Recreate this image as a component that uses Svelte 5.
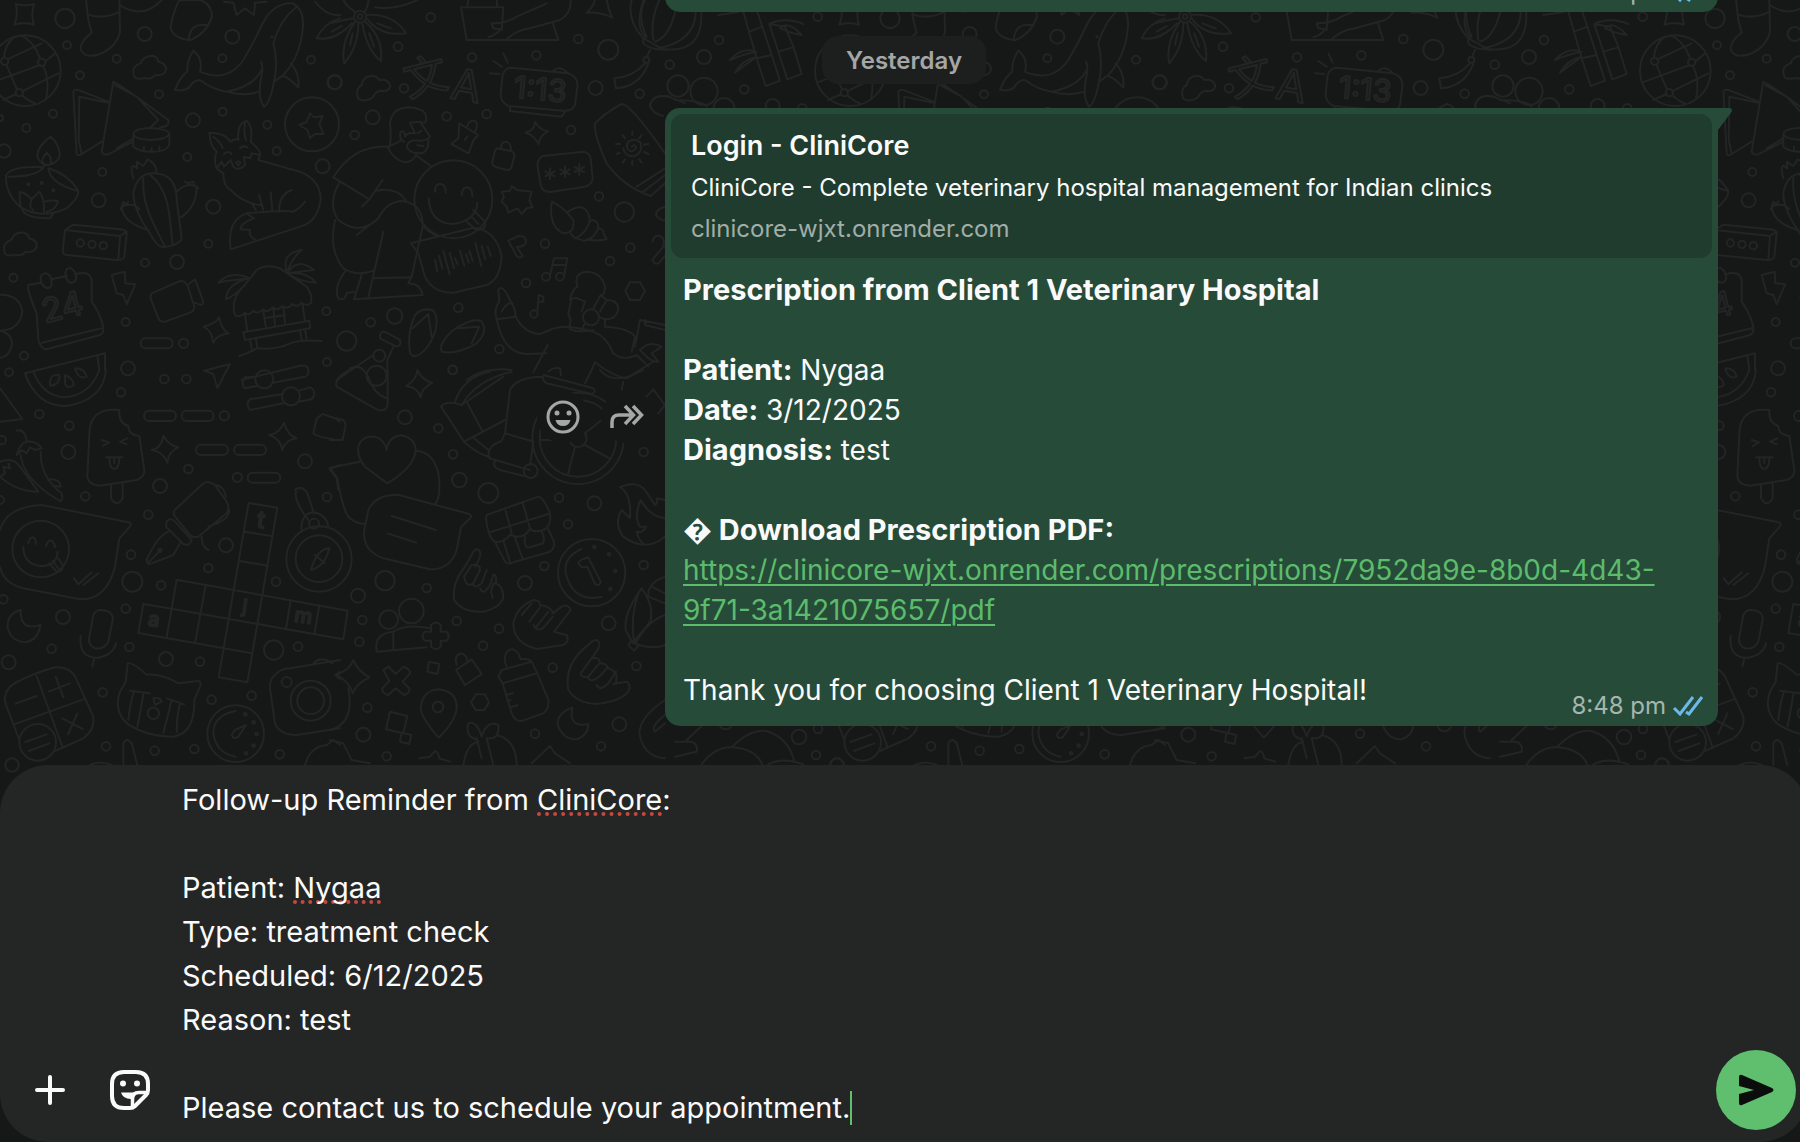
<script lang="ts">
  type Patch = {
    x: number
    y: number
    dots: number[][]
    pills?: number[][]
    glyphs?: { t: string; x: number; y: number; size: number; turn: number }[]
    lines: string[]
  }

  const TILE = 825
  const tiles = [0, 1, 2, 3]

  // Doodle wallpaper, drawn at 3x and scaled down per patch
  const patches: Patch[] = [
    {
      x: 0, y: 0,
      dots: [
        [195,55,29],[434,102,21],[697,110,21],[201,136,12],[350,176,12],[240,226,12],[477,283,12],[667,175,12],
        [933,179,12],[1003,247,21],[159,341,12],[79,384,12],[0,354,9],[579,361,21],[668,335,12],[802,374,12],
        [12,453,20],[830,453,12],[562,471,12],[968,499,21],[307,516,12],[296,601,21],[640,620,21],[625,731,12],
        [435,788,12],[531,786,21],[40,833,12],[377,966,12],[551,1030,14],[979,934,12],[72,1067,12],[384,1105,21],
        [27,1117,12],[981,1086,12],[936,373,81],[76,212,106],[14,184,11],[125,187,11],[58,278,11],[85,553,3],
        [125,549,3],[160,571,3],[241,729,11],[276,733,11],[310,737,11],[816,110,2],
      ],
      pills: [[422,1015,96,30]],
      glyphs: [{ t: '24', x: 195, y: 955, size: 100, turn: -14 }],
      lines: [
        'M47 12Q76 20 102 12Q92 42 102 74Q72 66 43 74Q56 42 47 12',
        'M12 170Q16 130 45 110M60 106Q100 120 120 175M22 178L125 130M-25 248L120 195M10 300Q30 290 50 282M66 274L175 220M20 196L50 266M130 200Q150 240 138 298M68 287Q90 305 105 310M138 182L166 160',
        'M258 0L265 60L275 98Q240 125 242 148Q255 178 300 162Q350 140 360 95L358 0M262 43Q310 60 360 35M358 15Q430 60 485 0',
        'M535 5Q515 50 512 85Q520 115 570 121Q620 100 636 50Q635 10 600 0H550Q538 0 535 5M566 120Q570 65 626 76',
        'M672 5L700 8L710 45L735 25L762 45L765 8L800 5',
        'M404 232Q390 200 422 190Q430 165 460 168Q475 172 475 185Q500 190 498 210Q490 230 465 225Q455 240 435 234Q415 240 404 232Z',
        'M600 215Q680 250 730 180Q760 130 785 75Q820 5 880 10Q915 30 908 90Q900 170 850 225L822 245Q835 190 820 130Q840 60 888 22M822 245Q810 310 792 320Q770 290 785 225Q790 200 783 185M785 210Q760 260 680 275Q640 270 600 240Q580 240 568 262Q550 275 525 270Q540 230 562 215Q560 180 580 152Q610 175 600 215M680 275Q730 290 778 275M872 190Q900 220 895 263Q870 235 850 228',
        'M945 5Q980 50 1020 45M950 115Q970 70 1020 55M950 115Q990 120 1020 100',
        'M220 275Q225 265 240 272L325 305M220 275L230 462Q235 470 245 462L305 425M238 290L325 308M238 290L236 420L245 462M340 245L305 455Q310 470 330 460L400 425M340 245Q350 245 505 360Q510 380 480 382M345 255L410 290L475 360L450 383M400 415L350 445',
        'M400 402Q402 385 455 384Q508 388 508 402Q500 418 455 420Q405 418 400 402V440Q420 456 455 455Q500 456 508 435V402M432 440V450M455 445V455M478 440V450',
        'M930 340L942 352L968 348L958 372L970 402L945 402L930 414L922 390L898 375L920 366Z',
        'M152 410Q110 440 112 470Q125 500 150 494Q185 480 178 455Q175 430 152 410ZM140 458Q122 475 130 492M140 458Q160 475 150 492M18 525Q40 495 130 502Q110 530 25 530M18 525Q15 580 60 620Q120 660 200 625Q240 590 234 570Q200 520 145 505Q150 550 234 573M130 502L137 492M60 575Q55 610 70 635Q85 655 150 655L160 640M60 575Q80 580 95 598L118 575Q135 600 132 635M95 598Q85 625 100 630M135 605Q150 598 175 604Q165 630 140 635',
        'M400 535Q390 500 400 497L412 505L410 485L430 498L443 478Q470 490 470 520M490 742Q470 740 450 700Q400 630 400 580Q410 520 460 520Q530 520 530 600L545 715Q540 735 490 742ZM430 535Q425 600 460 670Q480 710 495 740M450 525Q500 560 510 660L518 735M445 690Q370 670 365 620Q400 605 418 628M362 628L370 605L378 615L385 605M530 575Q560 545 590 560Q590 620 543 652M555 545L565 550L580 545L582 555L595 565',
        'M628 398Q630 440 650 455Q640 480 650 505L670 520Q670 560 692 570Q730 610 780 615M628 398Q680 400 690 425Q720 410 715 420Q710 370 740 362Q760 380 752 425Q785 455 780 465L775 480L900 515Q960 540 962 595Q955 665 900 680L692 748Q680 660 740 640Q850 630 880 635Q900 625 915 605M740 640L762 655Q720 670 722 688L750 690Q745 710 765 718M640 410Q665 430 668 445M735 370Q730 400 738 420M672 462Q685 450 695 462M720 445Q730 435 742 442M650 505L665 485L672 500L692 480L700 500Q715 515 735 495L732 470L750 475L755 460L780 465M708 488Q715 480 722 488L715 496ZM777 585L790 630M812 577L817 632M838 635Q835 585 875 570M758 615L768 630',
        'M195 690L188 755Q190 765 200 765L350 780Q370 780 373 770L380 700Q380 690 360 688L220 674ZM195 690L360 708L355 778M360 708L380 695',
        'M16 762Q2 730 34 720Q42 695 72 698Q87 702 87 715Q112 720 110 740Q102 760 77 755Q67 770 47 764Q27 770 16 762Z',
        'M85 855Q80 870 110 940L115 1020Q125 1050 140 1048L300 1005Q312 1000 310 980Q300 940 275 905V840Q270 815 240 820L225 823M200 828L155 838M122 848L85 855M125 1028L305 985M122 840Q120 820 138 820Q155 825 155 850Q155 865 140 864Q125 858 122 840M196 820Q198 803 212 804Q230 815 228 838Q222 850 210 848Q197 840 196 820',
        'M335 825L374 815L376 850L406 853L380 912L370 885L350 880Z',
        'M455 880L540 843Q560 840 567 870L583 920Q583 932 570 938L495 965Q480 967 475 955L452 895Q450 885 455 880ZM567 852L585 838L610 905Q610 915 600 914L583 908',
        'M610 980Q650 970 657 952Q665 990 686 1000Q650 1005 640 1028Q635 990 610 980Z',
        'M705 945Q690 900 730 860L770 810Q800 790 840 805L920 860Q940 890 932 910Q920 920 905 908Q890 925 878 912Q860 930 848 918Q830 935 820 922Q800 940 790 928Q770 945 760 932Q745 950 735 938Q715 955 705 945M735 945L742 995M908 915L915 965M730 997L928 962L930 985L735 1020ZM750 1020L755 1045M768 1018L772 1042M900 992L905 1018M915 990L920 1015M790 930L798 985M850 920L855 970M820 925L825 975M793 955L855 945M718 1068Q745 1060 770 1045Q830 1050 870 1030Q900 1018 965 1023M655 848Q690 810 750 835Q690 840 655 848ZM750 835Q680 850 678 898Q700 890 735 855M862 820Q840 760 905 750Q870 780 862 820ZM862 820Q890 770 942 810ZM862 820Q920 815 948 848Q900 845 870 825',
        'M0 884Q60 884 67 935Q60 990 0 992Q35 1000 36 1030Q30 1070 0 1073',
        'M75 1120L315 1060V1110M292 1068L298 1110M612 1112L690 1092L652 1165L640 1122ZM725 1140L900 1097Q928 1095 925 1112',
      ],
    },
    {
      x: 330, y: 0,
      dots: [
        [302,52,13],[204,140,13],[426,172,13],[619,166,13],[745,117,13],[835,149,30],[15,247,21],[222,265,13],
        [128,352,21],[350,349,13],[470,342,13],[74,405,13],[723,390,13],[797,264,21],[929,281,13],[807,589,13],
        [883,636,29],[901,743,13],[645,731,13],[840,783,13],[588,849,13],[385,923,13],[194,948,23],[122,967,13],
        [50,1023,29],[508,1047,13],[368,1109,13],[148,1067,18],[90,50,18],[90,50,7],[370,598,117],[783,952,24],
        [949,180,9],[648,830,12],[690,830,12],[612,942,11],[140,1127,30],
      ],
      glyphs: [
        { t: '1:13', x: 628, y: 300, size: 92, turn: 5 },
        { t: '文', x: 298, y: 275, size: 130, turn: -14 },
        { t: 'A', x: 402, y: 302, size: 130, turn: 10 },
      ],
      lines: [
        'M75 65Q30 130 43 190Q85 140 85 70M97 70Q110 150 153 183Q160 110 105 65M110 55Q150 110 228 100Q190 40 110 45M75 35Q50 20 40 0M105 35Q115 15 115 0M72 55Q40 60 0 70M65 70Q40 100 0 112M135 22Q200 30 262 0M68 100L60 135M118 100L132 140M142 70L182 85M35 78L5 95',
        'M393 22H520L515 90M393 22L410 120H685L668 68M415 0L412 20M500 0L502 20M485 70Q530 70 560 50L650 10M485 70L490 85L510 88Q500 105 475 112M530 118Q560 90 600 85L690 60Q725 40 722 0',
        'M770 38Q790 20 795 0M830 0Q835 30 847 53Q810 35 770 38',
        'M905 0Q890 60 940 115M945 0Q920 50 950 110Q930 120 945 135Q970 150 1000 148M988 0Q960 60 970 120M960 150L950 172M945 190Q910 230 853 235L858 265Q930 260 955 190',
        'M84 295Q75 265 95 255Q100 225 130 228Q145 232 148 240Q175 235 181 258Q175 278 152 272Q135 275 130 290Q105 310 84 295Z',
        'M545 203L715 220Q745 230 742 260L735 315Q725 335 700 332L535 318Q510 305 512 280L518 225Q525 203 545 203ZM540 320V333L695 350L705 335M670 212Q690 195 712 218M490 183L515 200M520 160L533 188M480 220L508 222',
        'M178 440Q185 420 180 370Q185 325 235 322Q285 325 288 350Q292 375 270 365L240 368L255 400Q230 395 225 410Q225 390 212 395Q205 415 222 425M270 365L300 410Q295 420 275 422Q235 415 230 440Q240 465 280 458Q298 445 295 420M172 440Q190 480 225 487Q250 485 258 465M262 436L280 438M175 440Q210 425 215 420M262 400L275 392',
        'M300 497L258 465M172 440Q70 435 10 532L118 598L158 540M118 598L95 620M140 572Q200 560 228 602M30 545Q-10 610 25 660Q90 710 145 655Q170 605 215 603Q280 610 278 680L245 830L235 850Q270 850 278 885L72 898L95 825M145 655L80 705M160 695L115 892M132 835L242 832M15 660Q-5 750 40 805Q80 830 132 812M45 815Q10 860 25 895Q45 905 50 880L72 875M280 680Q300 700 322 708',
        'M315 575Q315 550 332 552Q348 555 347 578M395 585Q398 560 412 562Q427 565 427 588M296 595Q300 670 370 672Q440 660 442 608M430 630L465 665Q470 690 440 690L410 665M425 650L445 672',
        'M388 370L445 405L430 420L416 460L364 432L385 415ZM412 378Q420 355 438 365Q445 375 435 395M405 420L412 410',
        'M243 730L430 683Q500 690 515 770Q510 840 470 855L370 878Q310 880 285 830L265 760ZM315 780L322 815M327 768L337 805M340 753L359 823M359 760L372 805M375 775L383 793M390 752L403 798M408 762L416 788M418 752L428 783M436 728L454 798M455 738L466 778M473 740L482 768',
        'M500 445L540 452Q555 458 553 468L545 500Q540 512 530 510L495 500Q485 495 487 485L495 452ZM513 445Q513 425 528 425Q545 430 542 452',
        'M587 398Q615 390 615 365Q630 390 654 394Q630 405 626 432Q612 405 587 398Z',
        'M545 558L560 570L580 572L605 575L598 600L608 622L590 625L575 642L562 625L535 638L530 620L515 605L522 590L515 575L540 572Z',
        'M640 468L760 455Q780 458 782 475L788 535Q785 555 765 560L660 576Q635 575 632 555L622 495Q625 472 640 468ZM660 505V538M646 514L674 529M674 514L646 529M705 499V532M691 508L719 523M719 508L691 523M748 492V525M734 501L762 516M762 501L734 516',
        'M795 370Q830 335 875 312Q900 310 1005 460M795 370Q790 400 830 490Q880 560 962 588L1010 545M920 560L1005 505M940 575L1005 525M907 395V405M878 405L885 415M858 432H870M860 462L870 458M878 488L885 478M907 495V483M935 488L928 478M955 462L942 456M955 432L942 434M935 405L928 415M905 440Q915 430 918 443Q912 458 898 452Q885 440 895 425Q915 412 932 428Q940 455 915 468Q885 472 880 445',
        'M1020 290Q970 280 960 315Q965 340 1000 348M1020 620Q980 620 978 645Q990 665 1020 662',
        'M665 605Q655 680 700 700Q735 700 730 660Q700 620 665 605M715 635Q770 600 780 660Q770 700 735 715L722 700M778 662Q805 655 805 685Q790 720 760 722L740 715M805 685Q825 690 820 700L830 718Q800 725 770 718',
        'M535 722L565 708Q590 705 588 728Q580 742 560 740L578 768Q570 778 560 768Z',
        'M660 825L672 775H712L702 830M670 795H708M622 940L626 885L640 890V905H624',
        'M968 725Q970 705 990 708Q1005 715 1000 735L1012 750M1000 740L968 778Q970 795 985 790L1012 760',
        'M720 900Q725 870 742 860Q730 815 775 815Q815 820 825 860Q825 880 815 888M742 895Q720 890 722 910L715 940L722 960L718 985Q740 1000 790 990M742 895L765 905L755 935M790 925L812 885L830 900L810 935M830 900Q865 900 865 930Q855 960 825 958L805 950M825 958V980M765 970L750 995',
        'M900 847H930L945 873L930 900H900L886 873Z',
        'M505 870Q515 855 530 880L545 910Q560 935 555 950L500 958Q490 930 508 905ZM515 935Q530 905 548 910M500 958Q520 1060 590 1062L650 1060M555 945Q580 1000 630 1002L660 990Q700 970 790 995Q830 1010 850 1060Q880 1085 920 1065L955 1100M825 980Q900 985 915 1010L905 1055M653 1035L610 1117M770 1140L795 1087Q850 1130 890 1135L970 1085M930 960L915 1040M930 960L1005 975M945 960V975L1005 990M930 1050Q960 1020 995 1040L965 1060L985 1085Q965 1090 930 1050',
        'M240 1060Q230 1000 255 945Q280 920 310 932Q330 960 310 1010Q280 1070 250 1068ZM248 985L295 942L305 1010M335 1055Q325 1030 370 990Q430 950 455 965Q475 995 440 1030Q380 1065 335 1055ZM385 985L448 980L425 1030',
        'M20 1140L130 1065M150 1005Q155 990 170 998L210 1020Q215 1035 200 1040L150 1015ZM190 1040L172 1080V1140M60 1105Q90 1090 108 1120M410 1140Q460 1100 545 1110M655 1115Q670 1100 690 1105L693 1125',
      ],
    },
    {
      x: 0, y: 370,
      dots: [
        [363,67,13],[118,132,13],[208,167,13],[205,246,21],[5,210,13],[493,27,13],[559,27,13],[673,137,14],
        [793,28,27],[873,79,27],[565,297,13],[712,322,14],[480,348,21],[915,274,21],[981,381,13],[256,379,13],
        [445,434,13],[0,390,12],[122,537,85],[678,526,21],[393,554,13],[625,594,13],[828,635,13],[397,635,30],
        [483,646,13],[10,688,13],[377,716,13],[189,741,21],[155,836,13],[388,831,13],[26,877,21],[498,867,21],
        [600,875,13],[821,840,29],[894,830,13],[860,936,15],[308,967,13],[635,989,13],[755,977,13],[932,992,60],
        [932,992,40],[707,1091,85],[736,1033,4],[761,1057,4],[770,1092,4],[761,1127,4],[738,1150,4],[113,1117,55],
        [318,1129,13],[464,1142,13],[583,1137,13],[839,1153,13],[36,1185,20],[957,567,98],[957,566,70],[942,461,15],
        [480,541,5],[460,1030,17],
      ],
      pills: [[432,122,96,31],[545,122,96,31],[588,224,96,31],[702,224,96,31],[743,308,98,30]],
      glyphs: [
        { t: 't', x: 780, y: 473, size: 70, turn: 8 },
        { t: 'a', x: 459, y: 768, size: 60, turn: 8 },
        { t: 'j', x: 732, y: 728, size: 55, turn: 8 },
        { t: 'm', x: 907, y: 758, size: 60, turn: 8 },
      ],
      lines: [
        'M75 10Q110 110 200 108Q310 90 318 0M100 5Q130 80 195 82Q270 75 298 0M150 40Q150 10 178 15Q180 45 150 47ZM195 15Q220 25 222 45Q200 60 195 40ZM225 -5Q255 -5 260 20Q235 30 225 -5Z',
        'M0 55L67 147L0 155M765 20L735 22Q720 38 735 55L770 48M818 38L915 20Q928 15 925 0M848 72L750 88Q735 100 750 120L850 100M898 62L930 52Q945 58 942 75Q940 88 925 90L895 95',
        'M940 190L950 145L968 132L1005 145L1020 155M940 190Q950 200 1000 208',
        'M50 182Q75 175 80 215Q60 220 50 255L65 240L80 250L90 232L105 240L125 235Q110 212 80 215M62 255Q70 330 180 393Q190 390 185 370Q120 320 122 245M0 275Q40 260 60 290L115 365Q50 365 0 320L15 310L10 290L30 295L25 280M145 328Q180 325 182 350L165 348',
        'M358 120Q270 110 268 190L262 320Q265 345 300 347L410 330Q435 320 433 300L418 198Q385 195 385 168Q355 160 358 120ZM333 345V385Q350 415 368 385V340M305 210L327 217L308 228M382 205L360 215L380 223M318 262H368M328 264Q328 295 343 297Q358 295 358 264M343 265V280',
        'M455 240Q485 235 490 197Q505 225 535 232Q505 245 502 278Q490 245 455 240ZM808 195Q840 190 852 158Q862 195 890 205Q855 210 847 240Q840 205 808 195Z',
        'M610 340Q625 330 645 345L680 395Q690 410 680 430L595 500Q580 505 570 495L525 440Q515 425 530 415ZM500 455Q510 440 525 455L575 510Q570 530 550 522L498 470ZM505 485Q470 500 440 570Q440 585 455 580L520 555L540 520M445 578L480 542M645 345Q670 345 678 380M688 420Q690 450 625 470M605 500Q605 530 625 540',
        'M125 405L385 457Q400 460 385 475L358 505L345 590Q320 690 240 688L70 655Q10 640 0 590M0 480Q20 410 125 405M85 520Q90 500 100 502Q110 510 107 522M138 528Q145 508 155 512Q165 520 165 532M70 530Q70 580 120 588Q170 590 173 545M148 580L170 605Q190 605 188 585L175 565M158 572L175 595M222 625L235 643L275 607M250 645L295 610',
        'M62 720Q20 730 23 775Q35 815 75 817Q115 810 121 765Q60 785 62 720Z',
        'M300 720Q340 720 338 750L325 815Q310 840 285 835Q262 825 268 800L280 735Q288 720 300 720ZM242 798Q235 865 295 863Q340 855 348 820M283 865L277 890',
        'M746 399L832 413L742 937L656 922ZM733 485L818 499M718 573L804 587M1043 722L530 629L500 803M515 716L1030 808M617 646L585 820M515 716L430 702L415 789L756 850M872 690L858 777M958 706L943 793M1043 722L1030 808',
        'M885 360Q900 345 920 365L942 430M888 365Q880 390 925 450M905 485Q900 430 942 427Q980 435 985 470M985 535Q950 540 933 600Q975 590 988 535ZM945 555L975 580M1020 285L988 297L1010 325L1015 360',
        'M30 950Q70 920 165 892Q215 890 230 930L280 1040Q285 1080 250 1105L165 1143M30 950Q5 980 20 1010L58 1110M110 918L187 1130M42 1063L257 986M47 1001L110 978M147 964L210 940M167 920L190 982M187 1045L248 1077M232 1030L204 1093M76 1116L140 1093M86 1143L148 1120',
        'M383 880Q395 875 440 914Q490 912 535 940L595 933Q605 935 600 950L583 990Q585 1090 520 1100Q440 1100 380 1060Q340 1020 360 965L377 935ZM390 962L450 970M500 985L552 1003M402 965Q390 1000 385 1050M430 970Q425 1010 412 1070M515 990Q505 1030 490 1090M540 1000Q530 1040 530 1085M460 985Q480 980 485 995L465 1005Z',
        'M707 1023Q640 1035 640 1091Q650 1150 707 1160M738 1065L715 1100Q700 1110 695 1095L705 1080Z',
        'M820 920Q840 895 870 895L1020 870M820 920Q805 935 812 970L825 1060Q840 1095 890 1095L1020 1075M938 883Q960 855 998 880M1020 905L1005 915L1020 928',
        'M370 1185V1120Q380 1100 395 1120L412 1185M915 1185Q930 1130 980 1125L1000 1110L1020 1125M270 1185Q300 1170 335 1185',
      ],
    },
    {
      x: 330, y: 370,
      dots: [
        [225,142,21],[325,175,13],[369,253,13],[368,0,13],[388,330,22],[475,369,30],[687,383,13],[793,400,21],
        [714,463,13],[941,246,13],[643,588,13],[585,639,21],[785,608,101],[793,531,4],[837,553,4],[856,603,4],
        [841,657,4],[941,585,13],[836,760,21],[919,888,13],[668,893,13],[165,632,29],[84,677,21],[290,654,13],
        [97,750,13],[88,815,13],[380,753,13],[507,776,13],[459,827,13],[176,749,28],[244,723,37],[324,1011,16],
        [112,1013,13],[100,1094,21],[170,1159,13],[615,1091,13],[868,1063,21],[813,1129,13],[744,205,137],
        [744,205,115],[744,205,26],[602,303,21],
      ],
      lines: [
        'M20 50Q10 25 60 0M20 50L140 118Q175 130 173 95V0M115 20Q130 70 170 85',
        'M228 48Q260 30 262 0Q275 30 307 38Q275 55 272 82Q262 50 228 48Z',
        'M0 140L40 150Q50 160 45 175L38 210L0 210',
        'M333 110Q350 90 395 105L520 20M333 110L402 215L525 150M410 95L458 185M375 95Q400 20 480 5M395 105Q440 30 545 5M540 60Q560 20 640 20M540 60L525 190L605 213M402 215Q440 250 480 262M432 205L475 240M525 190L515 212L490 225Q470 240 478 265L600 300M495 272Q485 290 510 300L582 318M610 215L600 285M640 15L790 55Q800 65 785 72L650 40Q635 30 640 15ZM765 40L785 0M810 0Q850 50 940 0M880 35L875 60M735 230L715 310M765 225L838 265M630 210H715M765 190L815 150M985 130L1005 105L970 58L950 80',
        'M172 340L105 290Q80 260 85 230Q95 195 135 200Q165 210 170 240Q175 200 215 196Q255 205 257 240Q255 290 172 340ZM90 275L0 293L22 325Q40 430 60 445Q80 462 105 462M257 242Q310 245 325 310Q335 380 315 402',
        'M210 376L410 430Q430 435 420 445L393 472L380 540Q360 600 300 598L160 565Q95 540 103 480L115 420Q140 370 210 376ZM185 438L318 480M173 490L258 518',
        'M470 435L625 380Q640 380 660 430Q665 470 640 480Q610 490 600 475Q590 500 560 500L540 495Q520 520 495 515Q475 505 468 445ZM478 487L655 432M525 415L545 490M578 398L600 475M497 520L525 575Q535 585 550 577L660 545Q675 535 672 515L655 478M520 512L540 575M555 503L578 567M585 500Q580 535 600 532L640 520Q645 500 635 485',
        'M405 590L430 545Q440 530 450 545Q455 560 435 590M405 590Q365 640 372 690Q400 730 460 725Q520 710 520 675Q515 640 490 640L483 665L488 685M402 620L425 585Q450 580 450 600L430 640Q410 655 402 620M430 640Q430 660 455 640L470 600M450 655Q460 680 480 645L490 615Q500 610 498 635',
        'M870 352Q920 330 945 360L975 405Q985 400 980 385L1005 390M870 352Q905 370 900 445L875 420Q850 460 880 500Q920 530 960 523Q990 515 1005 500M932 390Q960 440 1005 445M932 390Q910 440 930 470L948 470Q940 490 920 485Q925 510 940 520',
        'M755 537Q700 560 707 610Q730 700 815 680M745 580Q745 570 775 562L812 635Q810 650 795 642L772 590L755 592Z',
        'M140 845Q130 790 190 785M140 845L290 832M190 785Q230 760 300 775M190 785V835M303 785V765Q318 750 332 765V785H350Q362 800 350 812H332V830Q318 845 303 830V812H285Q270 800 285 785Z',
        'M550 760Q560 710 610 690Q630 690 630 705Q665 710 668 730L695 710Q715 700 722 720L672 785L710 795Q720 815 700 825L620 837Q550 820 550 760ZM575 735L605 700M598 755L630 712M615 775L655 725M610 765Q625 790 645 768L668 740',
        'M935 655Q880 730 887 780L908 820M935 655Q970 700 963 750L915 820M925 670Q900 740 912 815Q960 750 1005 735M920 822Q970 840 1005 825M895 825L905 812L925 828L912 842ZM1005 620Q950 640 955 680M965 650L1005 670M955 680L1005 700',
        'M505 920L515 900L605 875L622 910L518 940ZM530 890Q520 870 528 850Q545 825 565 850L572 868Q595 865 605 875M518 940L545 1030Q555 1055 575 1053L640 1030Q658 1015 655 990L622 910M527 975L550 970M532 993L542 990M540 1012L563 1006',
        'M715 960Q700 880 780 820Q800 800 808 820Q812 830 785 865M715 960Q740 1000 800 1002Q870 995 895 965Q905 945 890 935L850 942M785 865L752 910Q755 925 775 920L808 880M775 925Q790 945 830 895M800 945Q810 965 835 940L858 905M785 865Q810 860 810 880Q830 880 835 895Q855 900 860 920L858 940',
        'M18 915Q60 900 70 870Q85 905 118 922Q80 940 68 970Q55 930 18 915ZM55 955Q75 1060 0 1080',
        'M160 900L175 890L197 912L220 890Q240 895 240 910L218 935L238 955Q240 970 222 975L197 955L175 975Q155 970 157 955L178 933Z',
        'M297 875L328 882L322 912L292 905ZM378 900L425 868L455 912L405 945ZM380 885Q370 855 395 850Q410 855 412 872',
        'M326 1103Q270 1040 272 1010Q280 960 326 958Q380 965 380 1010Q380 1050 326 1103ZM438 973H465L477 997L463 1020H437L423 997Z',
        'M180 1025L232 1038L220 1090L168 1078ZM215 1088L244 1095L238 1122L210 1115Z',
        'M455 1100Q440 1050 415 1060Q405 1100 440 1108M455 1100Q470 1050 505 1065Q510 1110 470 1105M440 1105L455 1165M470 1105L490 1185M400 1185Q410 1120 445 1115M500 1095Q560 1110 560 1185',
        'M727 1013Q680 1030 683 1065Q700 1110 740 1108Q775 1095 775 1062Q715 1075 727 1013Z',
        'M605 1180L660 1128L675 1150L720 1180M268 1165L300 1160L315 1143Q325 1145 328 1165L360 1175M0 1110L40 1120L65 1170L120 1180',
        'M1005 990Q930 1040 928 1090Q940 1160 1005 1165M1005 1035Q960 1070 975 1085L1005 1060',
      ],
    },
    {
      x: 625, y: 0,
      dots: [[578,50,13],[282,120,13],[237,171,21],[134,194,13],[159,258,32],[237,274,41],[358,268,13],[297,325,31],[443,318,21],[532,325,13]],
      lines: [
        'M55 0Q30 80 60 110M158 0Q140 110 90 125M210 0Q230 120 100 145M225 0Q250 160 120 148M55 115L118 150',
        'M345 0L372 95L395 175L422 258L465 242L440 165L412 80L385 0M372 95L412 80M395 175L440 165M433 72L460 155L487 238L530 222L505 140L480 80ZM460 155L503 142M315 180Q350 140 395 155Q360 160 315 180M330 218Q350 180 395 170ZM280 45L340 36M433 72Q480 50 535 72M465 85Q490 60 530 105Q500 100 465 85',
        'M75 320Q80 280 130 290L180 310M150 300Q230 300 245 320',
      ],
    },
    {
      x: 675, y: 640,
      dots: [[152,248,20],[372,291,22],[429,267,13],[423,345,13],[486,375,20]],
      lines: ['M80 373Q120 320 170 322Q240 325 262 373M172 320Q220 270 270 272Q340 290 358 365M280 373Q320 350 385 373M0 305L50 305Q70 315 65 335L0 350M35 300L80 258'],
    },
  ]

  const details = [
    { label: 'Patient:', value: 'Nygaa' },
    { label: 'Date:', value: '3/12/2025' },
    { label: 'Diagnosis:', value: 'test' },
  ]

  const pdfUrl = 'https://clinicore-wjxt.onrender.com/prescriptions/7952da9e-8b0d-4d43-9f71-3a1421075657/pdf'
  const misspelt = ['CliniCore', 'Nygaa']

  let draft = $state(
    [
      'Follow-up Reminder from CliniCore:',
      '',
      'Patient: Nygaa',
      'Type: treatment check',
      'Scheduled: 6/12/2025',
      'Reason: test',
      '',
      'Please contact us to schedule your appointment.',
    ].join('\n')
  )

  let rows = $derived(draft.split('\n').length)
  let chunks = $derived(draft.split(new RegExp(`(${misspelt.join('|')})`)))
</script>

{#snippet meta(time: string)}
  <span class="meta">
    <span>{time}</span>
    <svg class="ticks" viewBox="0 0 32 22" aria-label="Read">
      <path d="M2 13L8 19L21 2M14 17L17 19L30 2" />
    </svg>
  </span>
{/snippet}

<div class="app">
  <svg class="wallpaper" aria-hidden="true">
    <defs>
      <g id="doodles">
        {#each patches as p}
          <g transform="translate({p.x} {p.y}) scale(0.33333)">
            {#each p.dots as [cx, cy, r]}
              <circle {cx} {cy} {r} />
            {/each}
            {#each p.pills ?? [] as [x, y, width, height]}
              <rect {x} {y} {width} {height} rx="15" />
            {/each}
            {#each p.lines as d}
              <path {d} />
            {/each}
            {#each p.glyphs ?? [] as g}
              <text font-size={g.size} transform="translate({g.x} {g.y}) rotate({g.turn})">{g.t}</text>
            {/each}
          </g>
        {/each}
      </g>
    </defs>
    {#each tiles as i}
      <use href="#doodles" x={i * TILE} />
    {/each}
  </svg>

  <main class="chat">
    <div class="row earlier">
      <div class="bubble">{@render meta('8:47 pm')}</div>
    </div>

    <div class="day">Yesterday</div>

    <div class="row">
      <button class="round" aria-label="React">
        <svg viewBox="0 0 34 34" width="34" height="34">
          <circle cx="17" cy="17" r="15" fill="none" stroke="currentColor" stroke-width="3" />
          <circle cx="11" cy="13" r="2.5" fill="currentColor" />
          <circle cx="23" cy="13" r="2.5" fill="currentColor" />
          <path d="M9.5 20H24.5Q23 26 17 26T9.5 20Z" fill="currentColor" />
        </svg>
      </button>
      <button class="round" aria-label="Forward">
        <svg viewBox="0 0 34 34" width="34" height="34" fill="none" stroke="currentColor" stroke-width="3.5">
          <path d="M2 28V22Q2 15 9 15H23M15 6L23.5 15L15 24M23 6L31.5 15L23 24" />
        </svg>
      </button>

      <article class="bubble message">
        <svg class="tail" viewBox="0 0 14 22" aria-hidden="true">
          <path d="M0 0H12Q15 1 13.5 4L0 22Z" />
        </svg>
        <section class="preview">
          <h2>Login - CliniCore</h2>
          <p class="about">CliniCore - Complete veterinary hospital management for Indian clinics</p>
          <p class="domain">clinicore-wjxt.onrender.com</p>
        </section>
        <div class="body">
          <p><strong>Prescription from Client 1 Veterinary Hospital</strong></p>
          <br />
          {#each details as d}
            <p><strong>{d.label}</strong> {d.value}</p>
          {/each}
          <br />
          <p><strong>&#xFFFD; Download Prescription PDF:</strong></p>
          <p><a href={pdfUrl}>{pdfUrl}</a></p>
          <br />
          <div class="last">
            <p>Thank you for choosing Client 1 Veterinary Hospital!</p>
            {@render meta('8:48 pm')}
          </div>
        </div>
      </article>
    </div>
  </main>

  <footer class="composer">
    <button class="tool" aria-label="Attach">
      <svg viewBox="0 0 40 40" width="40" height="40" fill="none" stroke="currentColor" stroke-width="4" stroke-linecap="round">
        <path d="M20 7V33M7 20H33" />
      </svg>
    </button>
    <button class="tool" aria-label="Stickers">
      <svg viewBox="0 0 40 40" width="40" height="40" fill="none" stroke="currentColor" stroke-width="4" stroke-linejoin="round">
        <path d="M14 2H26Q38 2 38 14V20Q38 23 36 25L25 36Q23 38 20 38H14Q2 38 2 26V14Q2 2 14 2Z" />
        <path d="M22.5 37V29Q22.5 22.5 29 22.5H37" stroke-width="3.5" />
        <circle cx="13" cy="13.5" r="3" fill="currentColor" stroke="none" />
        <circle cx="27" cy="13.5" r="3" fill="currentColor" stroke="none" />
        <path d="M11 22.5H25Q22 24 22 29Q13 29.5 11 22.5Z" fill="currentColor" stroke="none" />
      </svg>
    </button>
    <div class="editor">
      <div class="marks" aria-hidden="true">{#each chunks as c}{#if misspelt.includes(c)}<span class="typo">{c}</span>{:else}{c}{/if}{/each}<span class="caret"></span></div>
      <textarea aria-label="Type a message" spellcheck="false" {rows} bind:value={draft}></textarea>
    </div>
    <button class="send" aria-label="Send">
      <svg viewBox="0 0 36 32" width="36" height="32">
        <path d="M1 3Q1 0 4 1L34 14Q37 16 34 18L4 31Q1 32 1 29V20L16 16L1 12Z" fill="currentColor" />
      </svg>
    </button>
  </footer>
</div>

<style>
  :global(body) { background: #161717; }

  .app {
    position: relative;
    display: flex;
    flex-direction: column;
    min-height: 100vh;
    overflow: hidden;
    background: #161717;
    color: #fafafa;
    font-family: Inter, "Noto Sans", sans-serif;
  }

  .wallpaper {
    position: absolute;
    inset: 0;
    width: 100%;
    height: 100%;
    fill: none;
    stroke: #232525;
    stroke-width: 6;
    stroke-linejoin: round;
    stroke-linecap: round;
  }
  .wallpaper text { text-anchor: middle; font-family: Inter, "Noto Sans CJK SC", sans-serif; }

  .chat {
    position: relative;
    flex: 1;
    display: flex;
    flex-direction: column;
    align-items: center;
    gap: 24px;
    margin-right: -8px;
  }

  .row {
    box-sizing: border-box;
    width: 100%;
    display: flex;
    justify-content: flex-end;
    align-items: center;
    gap: 12px;
    padding: 0 90px;
  }
  .earlier { height: 12px; overflow: hidden; align-items: flex-end; }
  .earlier .bubble { display: flex; justify-content: flex-end; padding: 5px; }
  .earlier .meta { margin: 0 9px 0 0; }

  .day {
    padding: 1px 24px 0;
    border-radius: 16px;
    background: #1d1f1f;
    color: #a5a6a6;
    font-size: 24px;
    font-weight: 600;
    line-height: 47px;
  }

  .bubble {
    box-sizing: border-box;
    flex: 0 1 1053px;
    border-radius: 15px;
    background: #264b39;
  }
  .message { position: relative; padding: 6px; border-top-right-radius: 0; }
  .tail { position: absolute; top: 0; left: 100%; width: 14px; height: 22px; fill: #264b39; }

  .preview { padding: 13px 20px 11px; border-radius: 12px; background: #203c2f; }
  h2, p { margin: 0; font-weight: 400; }
  h2 { font-size: 27px; font-weight: 600; line-height: 38px; }
  .about { font-size: 24px; line-height: 46px; }
  .domain { font-size: 24px; line-height: 36px; color: #a0aea7; }

  .body { padding: 12px 12px 10px; font-size: 28px; line-height: 40px; }
  .body p { height: 100%; }
  strong { font-size: 29px; font-weight: 700; line-height: 1; }
  a { color: #5cbc6b; text-decoration-thickness: 2px; text-underline-offset: 4px; }
  .last { display: flex; justify-content: space-between; }

  .meta {
    display: flex;
    align-items: center;
    align-self: flex-end;
    gap: 6px;
    margin: 0 -4px -11px 0;
    color: #a6b5ad;
    font-size: 24px;
    line-height: 30px;
  }
  .ticks { width: 32px; height: 22px; fill: none; stroke: #6cb8ea; stroke-width: 3; }

  button {
    display: flex;
    flex: none;
    align-items: center;
    justify-content: center;
    padding: 0;
    border: none;
    border-radius: 50%;
    background: none;
    color: inherit;
    cursor: pointer;
  }
  .round { width: 52px; height: 52px; background: #161717; color: #a5a6a6; }

  .composer {
    position: relative;
    display: flex;
    align-items: flex-end;
    margin-right: -8px;
    padding: 13px 12px 12px 10px;
    border-radius: 48px;
    background: #242626;
  }
  .tool { width: 80px; height: 80px; }
  .send { width: 80px; height: 80px; background: #5fbf6f; color: #0b0d0c; }

  .editor { flex: 1; display: grid; padding: 0 12px; font-size: 29px; line-height: 44px; }
  .marks, textarea {
    grid-area: 1 / 1;
    margin: 0;
    padding: 0;
    border: none;
    font: inherit;
    white-space: pre-wrap;
  }

  /* lays out the same words as the textarea, only to place the dots and the caret */
  .marks { visibility: hidden; }
  .typo { position: relative; }
  .typo::after {
    content: "";
    position: absolute;
    left: 0;
    right: 0;
    bottom: 1px;
    border-bottom: 4px dotted #c8483f;
    visibility: visible;
  }
  .caret {
    display: inline-block;
    width: 2px;
    height: 34px;
    margin-bottom: 4px;
    background: #5fbf6f;
    vertical-align: middle;
    visibility: visible;
  }
  textarea {
    position: relative;
    background: none;
    color: #fafafa;
    caret-color: #5fbf6f;
    outline: none;
    resize: none;
    overflow: hidden;
  }
</style>
